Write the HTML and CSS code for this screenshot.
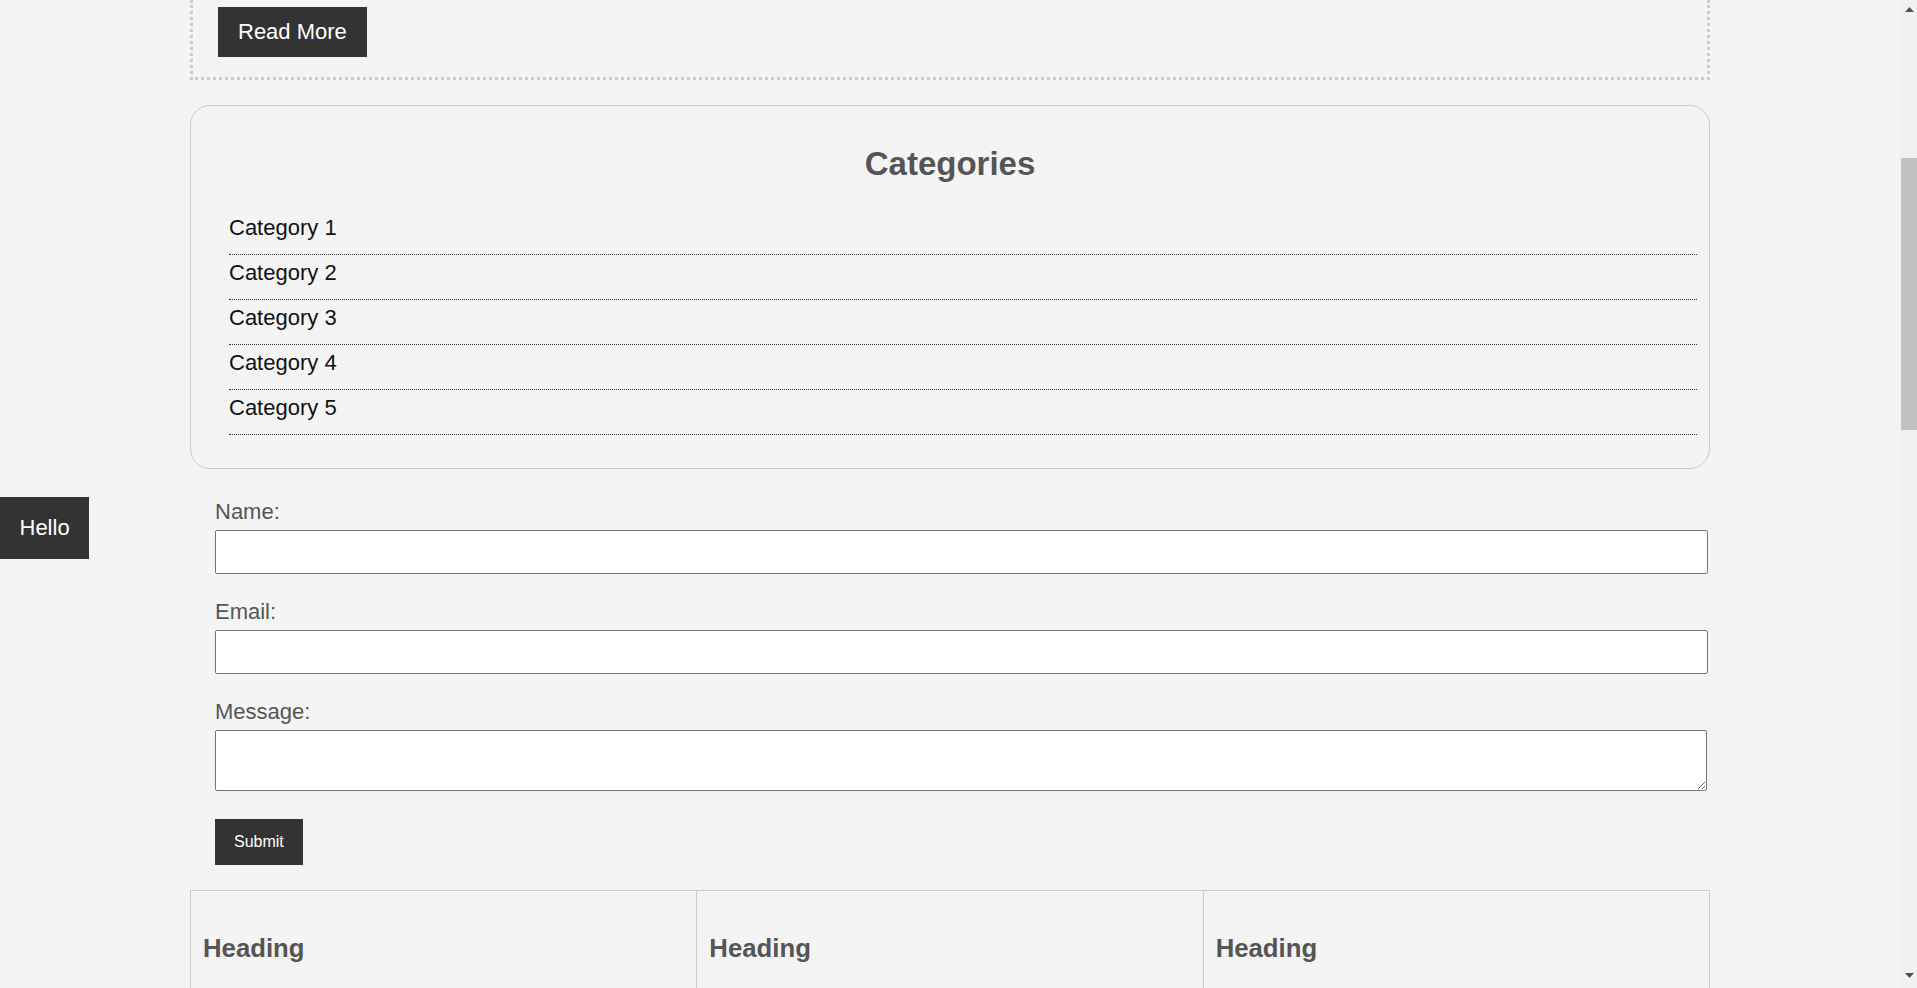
FILE: index.html
```html
<!DOCTYPE html>
<html lang="en">
<head>
<meta charset="utf-8">
<title>Blog</title>
<link rel="stylesheet" href="styles.css">
</head>
<body>
<aside class="hello-tab">Hello</aside>

<div class="scrollbar" aria-hidden="true">
  <div class="scroll-btn">
    <svg class="scroll-arrow" width="9" height="5" viewBox="0 0 9 5"><polygon points="0,5 9,5 4.5,0" fill="#505050"/></svg>
  </div>
  <div class="scroll-track">
    <div class="scroll-thumb"></div>
  </div>
  <div class="scroll-btn scroll-btn-down">
    <svg class="scroll-arrow" width="9" height="5" viewBox="0 0 9 5"><polygon points="0,0 9,0 4.5,5" fill="#505050"/></svg>
  </div>
</div>

<div class="page">
  <div class="container">
    <article class="post">
      <div class="post-actions">
        <a class="btn read-more" href="#">Read More</a>
      </div>
    </article>

    <section class="categories">
      <h2 class="categories-title">Categories</h2>
      <ul class="category-list">
        <li class="category-item">Category 1</li>
        <li class="category-item">Category 2</li>
        <li class="category-item">Category 3</li>
        <li class="category-item">Category 4</li>
        <li class="category-item">Category 5</li>
      </ul>
    </section>

    <form class="contact-form">
      <label class="form-label" for="name">Name:</label>
      <input class="form-input" id="name" type="text">
      <label class="form-label" for="email">Email:</label>
      <input class="form-input" id="email" type="email">
      <label class="form-label" for="message">Message:</label>
      <textarea class="form-textarea" id="message"></textarea>
      <button class="btn submit-btn" type="submit">Submit</button>
    </form>

    <section class="features">
      <div class="feature">
        <h3 class="feature-title">Heading</h3>
      </div>
      <div class="feature">
        <h3 class="feature-title">Heading</h3>
      </div>
      <div class="feature">
        <h3 class="feature-title">Heading</h3>
      </div>
    </section>
  </div>
</div>
</body>
</html>
```

FILE: styles.css
```css
html {
  background: #f4f4f4;
}

body {
  margin: 0;
  background: #f4f4f4;
  font-family: "Liberation Sans", Arial, sans-serif;
  font-size: 22px;
  color: #111;
}

.page {
  width: calc(100% - 17px);
}

.container {
  width: 80%;
  margin: 0 auto;
}

/* post (top border scrolled out of view) */
.post {
  border: 3px dotted #ccc;
  border-top: none;
  padding: 7px 25px 20px;
}
.post-actions {
  display: flex;
}

.btn {
  background: #333;
  color: #fff;
  border: 0;
  border-radius: 0;
  text-decoration: none;
  font-family: "Liberation Sans", Arial, sans-serif;
  cursor: pointer;
}
.read-more {
  padding: 12px 20px;
  font-size: 22px;
  line-height: normal;
}

/* categories */
.categories {
  border: 1px solid #ccc;
  border-radius: 20px;
  padding: 12px;
  margin: 25px 0 30px;
}
.categories-title {
  text-align: center;
  font-size: 33px;
  color: #555;
  margin: 27px 0;
}
.category-list {
  list-style: none;
  margin: 22px 0 21px;
  padding: 0 0 0 26px;
}
.category-item {
  padding: 5px 0 14px;
  line-height: 25px;
  border-bottom: 1px dotted #333;
}

/* form */
.contact-form {
  padding-left: 25px;
}
.form-label {
  display: block;
  color: #555;
  margin-bottom: 5px;
}
.form-input,
.form-textarea {
  display: block;
  box-sizing: border-box;
  background: #fff;
  border: 1px solid #767676;
  border-radius: 2px;
  padding: 4px 8px;
  margin: 0;
}
.form-input {
  width: calc(100% - 2px);
  height: 44px;
  margin-bottom: 25px;
  font-family: "Liberation Sans", Arial, sans-serif;
  font-size: 16px;
}
.form-textarea {
  width: calc(100% - 3px);
  height: 61px;
  margin-bottom: 28px;
  font-family: "Liberation Mono", monospace;
  font-size: 13px;
}
.submit-btn {
  display: block;
  padding: 14px 19px;
  font-size: 16px;
  line-height: normal;
}

/* features */
.features {
  display: grid;
  grid-template-columns: repeat(3, 1fr);
  border-top: 1px solid #ccc;
  border-left: 1px solid #ccc;
  margin-top: 25px;
}
.feature {
  padding: 17px 12px;
  border-right: 1px solid #ccc;
  border-bottom: 1px solid #ccc;
}
.feature-title {
  font-size: 1.17em;
  color: #555;
  margin: 1em 0;
}

/* floating tab */
.hello-tab {
  position: fixed;
  left: 0;
  top: 497px;
  background: #333;
  color: #fff;
  padding: 18px 19.5px;
  font-size: 22px;
  line-height: normal;
  z-index: 10;
}

/* window scrollbar */
.scrollbar {
  position: fixed;
  top: 0;
  right: 0;
  bottom: 0;
  width: 17px;
  background: #f1f1f1;
  display: flex;
  flex-direction: column;
  z-index: 20;
}
.scroll-btn {
  height: 17px;
  flex: none;
  display: flex;
  justify-content: center;
  padding-top: 7px;
  box-sizing: border-box;
}
.scroll-btn-down {
  padding-top: 2px;
}
.scroll-arrow {
  display: block;
  margin-left: 1px;
}
.scroll-track {
  flex: 1;
  padding-top: 141px;
}
.scroll-thumb {
  height: 272px;
  margin-left: 1px;
  background: #c1c1c1;
}
```
